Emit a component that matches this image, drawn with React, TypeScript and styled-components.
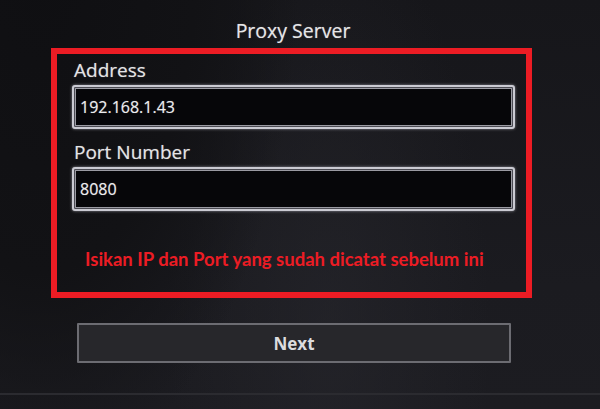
import React from "react";
import styled, { createGlobalStyle } from "styled-components";

const Global = createGlobalStyle`
  html, body { margin: 0; padding: 0; background: #19191d; }
  #root { width: 600px; height: 409px; }
`;

const Screen = styled.div`
  position: relative;
  width: 600px;
  height: 409px;
  overflow: hidden;
  background:
    radial-gradient(ellipse 260px 520px at 40px -40px, #0f0f12 0%, #121215 60%, rgba(18,18,21,0) 100%),
    radial-gradient(ellipse 160px 420px at 330px 330px, rgba(40,40,46,0.55) 0%, rgba(40,40,46,0) 100%),
    linear-gradient(180deg, #16161a 0%, #1b1b20 70%, #1c1c21 100%);
  font-family: "Open Sans", "Noto Sans", sans-serif;
  display: flex;
  flex-direction: column;
  align-items: stretch;
`;

const Title = styled.div`
  margin-top: 19px;
  height: 24px;
  line-height: 24px;
  font-size: 19.5px;
  color: #e6e6e8;
  text-align: center;
  margin-left: -14px;
  text-shadow: 0 0 1px rgba(255, 255, 255, 0.45);
`;

const Frame = styled.div`
  margin: 5px 0 0 51px;
  width: 481px;
  height: 250px;
  box-sizing: border-box;
  border: 6px solid #ec1c24;
  display: flex;
  flex-direction: column;
  padding: 4px 11px 0 15px;
`;

const Label = styled.div<{ $gap?: number }>`
  height: 24px;
  line-height: 24px;
  font-size: 19px;
  color: #e4e4e6;
  padding-left: 2px;
  margin-top: ${(p) => p.$gap ?? 0}px;
  text-shadow: 0 0 1px rgba(255, 255, 255, 0.45);
`;

const Field = styled.div`
  margin-top: 3px;
  height: 44px;
  box-sizing: border-box;
  border: 2px solid #cacad2;
  border-radius: 3px;
  background: #060609;
  box-shadow:
    0 0 3px rgba(220, 220, 230, 0.6),
    inset 0 0 0 1px #4a4a52,
    inset 0 0 0 2px #9a9aa2;
  display: flex;
  align-items: center;
  padding-left: 6px;
  font-size: 16px;
  color: #ececee;
  text-shadow: 0 0 1px rgba(255, 255, 255, 0.45);
`;

const Note = styled.div`
  margin-top: 37px;
  padding-left: 13px;
  font-family: "Lato", "Open Sans", sans-serif;
  font-weight: 700;
  font-size: 18.5px;
  line-height: 22px;
  color: #ec1c24;
  white-space: nowrap;
`;

const Button = styled.div`
  margin: 25px 0 0 77px;
  width: 434px;
  height: 40px;
  box-sizing: border-box;
  border: 2px solid #6c6c72;
  border-radius: 1px;
  background: #27272b;
  display: flex;
  align-items: center;
  justify-content: center;
  font-size: 17px;
  font-weight: 700;
  color: #dcdcde;
`;

const Footer = styled.div`
  margin-top: 30px;
  height: 2px;
  background: #2b2b30;
`;

export default function App() {
  return (
    <>
      <Global />
      <Screen>
        <Title>Proxy Server</Title>
        <Frame>
          <Label>Address</Label>
          <Field>192.168.1.43</Field>
          <Label $gap={11}>Port Number</Label>
          <Field>8080</Field>
          <Note>Isikan IP dan Port yang sudah dicatat sebelum ini</Note>
        </Frame>
        <Button>Next</Button>
        <Footer />
      </Screen>
    </>
  );
}
